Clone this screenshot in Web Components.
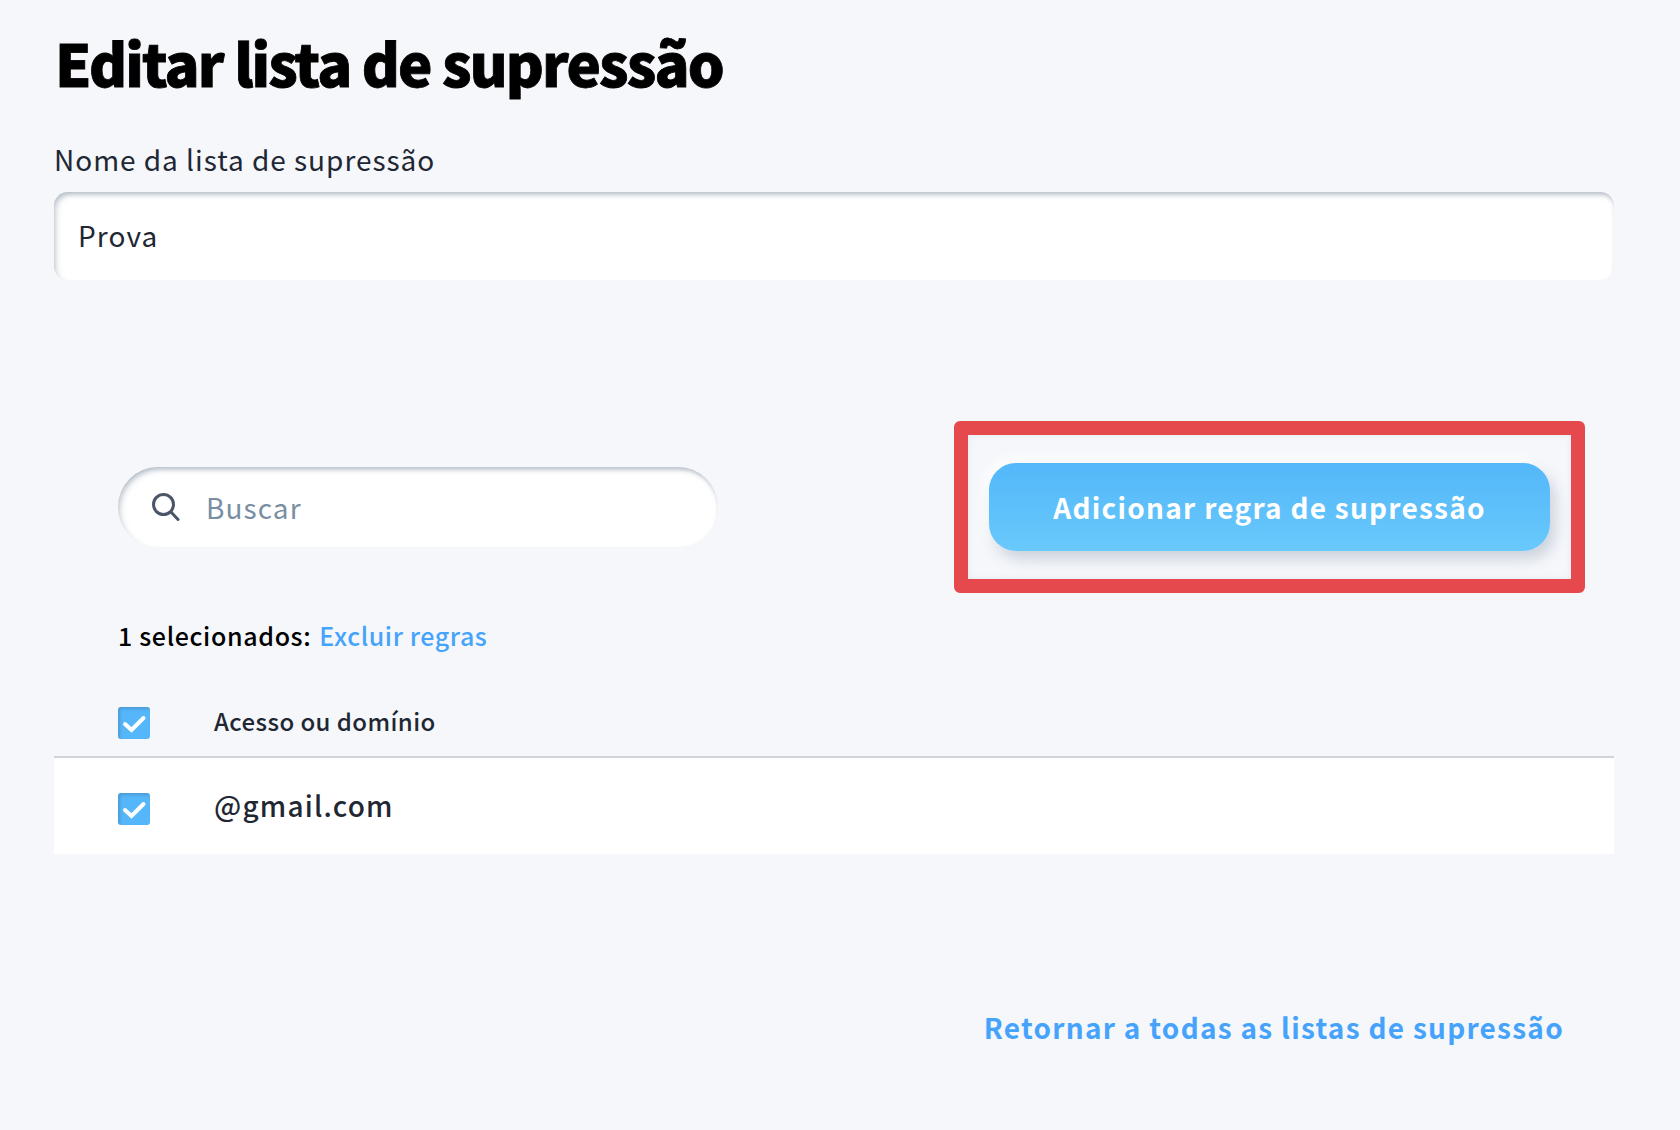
<!DOCTYPE html>
<html lang="pt"><head><meta charset="utf-8"><title>Editar lista de supressão</title>
<style>
html,body{margin:0;background:#f5f7fb}
body{font-family:"Noto Sans CJK JP","Noto Sans",sans-serif;color:#1f2733}
</style></head><body>
<suppression-page></suppression-page>
<template id="check-t"><style>
:host{display:block;width:32px;height:32px;flex:none}
.b{width:32px;height:32px;border-radius:3px;background:#55b7fa;box-shadow:inset 2px 2px 3px rgba(60,90,130,.3);display:block}
svg{display:block}
</style><div class="b"><svg width="32" height="32" viewBox="0 0 32 32"><path d="M7 17 13.500 23 25.500 11" fill="none" stroke="#fff" stroke-width="4" stroke-linecap="round" stroke-linejoin="miter"/></svg></div></template>
<template id="search-t"><style>
:host{display:flex;align-items:center;width:600px;height:80px;box-sizing:border-box;padding-left:34px;border-radius:40px;background:#fff;box-shadow:inset 4px 4px 6px -2px rgba(130,145,160,.4),inset 0 3px 4px -1px rgba(130,145,160,.4);font-size:28px;letter-spacing:1.100px;color:#7a8ea3}
svg{flex:none;margin-right:26px}
span{line-height:40px}
</style><svg width="28" height="28" viewBox="0 0 28 28"><circle cx="11.500" cy="11.500" r="10" fill="none" stroke="#4a5568" stroke-width="3"/><path d="M19 19l7 7.500" fill="none" stroke="#4a5568" stroke-width="3" stroke-linecap="round"/></svg><span><slot></slot></span></template>
<template id="btn-t"><style>
:host{display:block;margin:28px 21px}
.b{width:561px;height:88px;border-radius:27px;background:linear-gradient(#53b7f9,#69c9fc);color:#fff;font-weight:700;font-size:28px;letter-spacing:1.250px;display:flex;align-items:center;justify-content:center;box-shadow:5px 8px 14px rgba(110,125,150,.3),-5px -5px 12px rgba(255,255,255,.9)}
</style><div class="b"><slot></slot></div></template>
<template id="page-t"><style>
:host{display:block;height:1130px;box-sizing:border-box;padding:27px 66px 0 54px;overflow:hidden}
h1{margin:0;font-size:58px;line-height:70px;font-weight:900;letter-spacing:-1.900px;color:#000;-webkit-text-stroke:.8px #000;margin-left:1px}
label{display:block;margin-top:42px;font-size:28px;line-height:40px;letter-spacing:.97px}
.input{height:88px;margin-top:13px;box-sizing:border-box;padding:0 0 2px 24px;display:flex;align-items:center;background:#fff;border-radius:14px;font-size:28px;letter-spacing:1.100px;box-shadow:inset 4px 4px 6px -2px rgba(130,145,160,.4),inset 0 3px 4px -1px rgba(130,145,160,.4)}
.tools{display:flex;align-items:center;justify-content:space-between;margin-top:141px;padding:0 29px 0 64px}
.red{border:14px solid #e6494d;border-radius:6px;box-shadow:inset 0 0 6px rgba(120,130,150,.12)}
.sel{margin:22px 0 0 64px;font-size:25px;line-height:40px;font-weight:500;letter-spacing:.65px;color:#000;display:flex;gap:8px}
.sel a{color:#46a3fb;font-weight:500;letter-spacing:.6px}
.head{display:flex;align-items:center;height:64px;margin-top:37px;padding:0 0 0 64px;border-bottom:2px solid #d2d4d9}
.head span{margin-left:64px;font-size:24px;font-weight:500;letter-spacing:.42px;line-height:36px;position:relative;top:-3px}
.head suppression-check{position:relative;top:-1px}
.row{display:flex;align-items:center;height:96px;background:#fff;padding-left:64px}
.row span{margin-left:64px;font-size:28px;font-weight:500;letter-spacing:1.200px;line-height:40px;position:relative;top:-1px}
.row suppression-check{position:relative;top:3px}
.back{display:block;margin-top:153px;text-align:right;padding-right:50px;font-size:28px;line-height:40px;font-weight:700;letter-spacing:1.270px;color:#46a3fb}
</style>
<h1>Editar lista de supressão</h1>
<label>Nome da lista de supressão</label>
<div class="input">Prova</div>
<div class="tools"><suppression-search>Buscar</suppression-search><div class="red"><suppression-button>Adicionar regra de supressão</suppression-button></div></div>
<div class="sel"><span>1 selecionados:</span><a>Excluir regras</a></div>
<div class="head"><suppression-check></suppression-check><span>Acesso ou domínio</span></div>
<div class="row"><suppression-check></suppression-check><span>@gmail.com</span></div>
<a class="back">Retornar a todas as listas de supressão</a>
</template>
<script>
const mk=(n,t)=>customElements.define(n,class extends HTMLElement{constructor(){super();this.attachShadow({mode:'open'}).appendChild(document.getElementById(t).content.cloneNode(true))}});
mk('suppression-check','check-t');mk('suppression-search','search-t');mk('suppression-button','btn-t');mk('suppression-page','page-t');
</script>
</body></html>
